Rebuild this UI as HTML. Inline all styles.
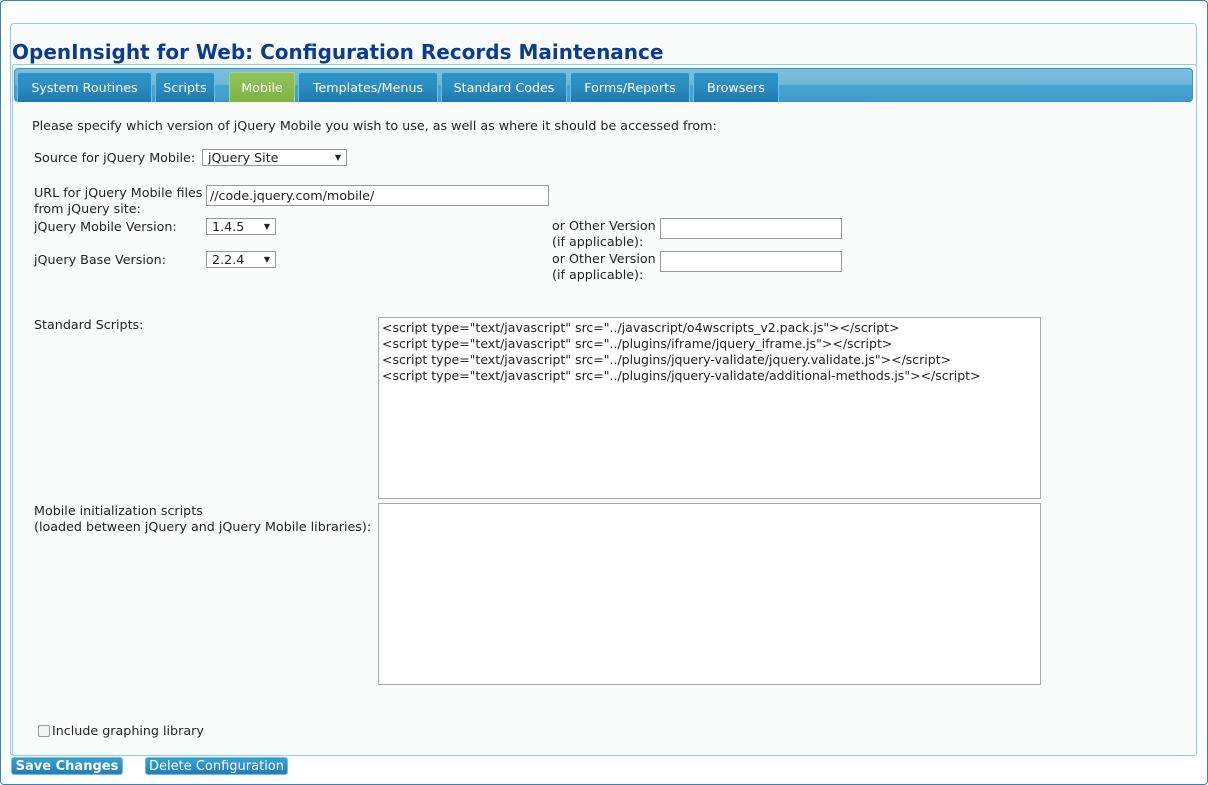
<!DOCTYPE html>
<html><head><meta charset="utf-8"><style>
body{margin:0;width:1208px;height:785px;background:#fff;font-family:"DejaVu Sans","Liberation Sans",sans-serif;font-size:12px;color:#222;position:relative;overflow:hidden}
.a{position:absolute;white-space:nowrap}
.outer{position:absolute;left:0;top:0;width:1206px;height:783px;border:1px solid #2e86c1;border-radius:4px}
.panel{position:absolute;left:10px;top:23px;width:1185px;height:731px;border:1px solid #86d2f0;border-radius:4px;background:#fafcfc}
.content{position:absolute;left:12px;top:64px;width:1183px;height:690px;border:1px solid #86d2f0;border-radius:3px;background:#fafcfc}
.bar{position:absolute;left:14px;top:68px;width:1179px;height:34px;border-radius:4px;background:linear-gradient(#7dbfdd,#6fb6d8 48%,#4aa4ce 52%,#3f9dcb);border:1px solid #3d8fc5;box-sizing:border-box}
.tab{position:absolute;top:72px;height:30px;box-sizing:border-box;border:1px solid #6cc0e8;border-bottom:none;border-radius:3px 3px 0 0;background:linear-gradient(#2e95c8,#2b8bc0 50%,#1d78b0);color:#fff;font-size:12.7px;text-align:center;line-height:30px}
.tab.on{background:linear-gradient(#92c45a,#7db342);border-color:#a9d67a}
.sel{position:absolute;height:17px;border:1px solid #999;background:#fff;box-sizing:border-box;font-size:12.7px;line-height:15px;padding-left:5px}
.sel:after{content:"▼";position:absolute;right:5px;top:0;font-size:8px}
.inp{position:absolute;border:1px solid #999;background:#fff;box-sizing:border-box;height:21px;font-size:12.7px;line-height:19px;padding-left:3px}
.ta{position:absolute;border:1px solid #aaa;background:#fff;box-sizing:border-box;font-size:12.5px;line-height:16px;padding:2px 3px}
.btn{position:absolute;top:757px;height:18px;border-radius:3px;background:linear-gradient(#3aa0d2,#1f7fb8);color:#fff;font-size:13px;line-height:18px;text-align:center;border:1px solid #6cc0e8;box-sizing:border-box}
.t{font-size:12.7px}
</style></head><body>
<div class="outer"></div>
<div class="panel"></div>
<div class="a" style="left:12px;top:40px;font-size:20px;font-weight:bold;color:#0b3c93;">OpenInsight for Web: Configuration Records Maintenance</div>
<div class="content"></div>
<div class="bar"></div>
<div class="tab" style="left:17px;width:135px">System Routines</div>
<div class="tab" style="left:155px;width:60px">Scripts</div>
<div class="tab on" style="left:229px;width:66px">Mobile</div>
<div class="tab" style="left:298px;width:140px">Templates/Menus</div>
<div class="tab" style="left:441px;width:126px">Standard Codes</div>
<div class="tab" style="left:570px;width:120px">Forms/Reports</div>
<div class="tab" style="left:693px;width:86px">Browsers</div>
<div class="a t" style="left:32px;top:118px">Please specify which version of jQuery Mobile you wish to use, as well as where it should be accessed from:</div>
<div class="a t" style="left:34px;top:150px">Source for jQuery Mobile:</div>
<div class="sel" style="left:202px;top:149px;width:145px">jQuery Site</div>
<div class="a t" style="left:34px;top:185px;line-height:16px">URL for jQuery Mobile files<br>from jQuery site:</div>
<div class="inp" style="left:206px;top:185px;width:343px">//code.jquery.com/mobile/</div>
<div class="a t" style="left:34px;top:219px">jQuery Mobile Version:</div>
<div class="sel" style="left:206px;top:218px;width:70px">1.4.5</div>
<div class="a t" style="left:34px;top:252px">jQuery Base Version:</div>
<div class="sel" style="left:206px;top:251px;width:70px">2.2.4</div>
<div class="a t" style="left:552px;top:218px;line-height:16px">or Other Version<br>(if applicable):</div>
<div class="inp" style="left:660px;top:218px;width:182px"></div>
<div class="a t" style="left:552px;top:251px;line-height:16px">or Other Version<br>(if applicable):</div>
<div class="inp" style="left:660px;top:251px;width:182px"></div>
<div class="a t" style="left:34px;top:317px">Standard Scripts:</div>
<div class="ta" style="left:378px;top:317px;width:663px;height:182px">&lt;script type="text/javascript" src="../javascript/o4wscripts_v2.pack.js"&gt;&lt;/script&gt;<br>&lt;script type="text/javascript" src="../plugins/iframe/jquery_iframe.js"&gt;&lt;/script&gt;<br>&lt;script type="text/javascript" src="../plugins/jquery-validate/jquery.validate.js"&gt;&lt;/script&gt;<br>&lt;script type="text/javascript" src="../plugins/jquery-validate/additional-methods.js"&gt;&lt;/script&gt;</div>
<div class="a t" style="left:34px;top:503px;line-height:16px">Mobile initialization scripts<br>(loaded between jQuery and jQuery Mobile libraries):</div>
<div class="ta" style="left:378px;top:503px;width:663px;height:182px"></div>
<div class="a" style="left:38px;top:725px;width:10px;height:10px;border:1px solid #999;border-radius:2px;background:#f4f4f4"></div>
<div class="a t" style="left:52px;top:723px">Include graphing library</div>
<div class="btn" style="left:11px;width:112px;font-weight:bold">Save Changes</div>
<div class="btn" style="left:145px;width:143px">Delete Configuration</div>
</body></html>
